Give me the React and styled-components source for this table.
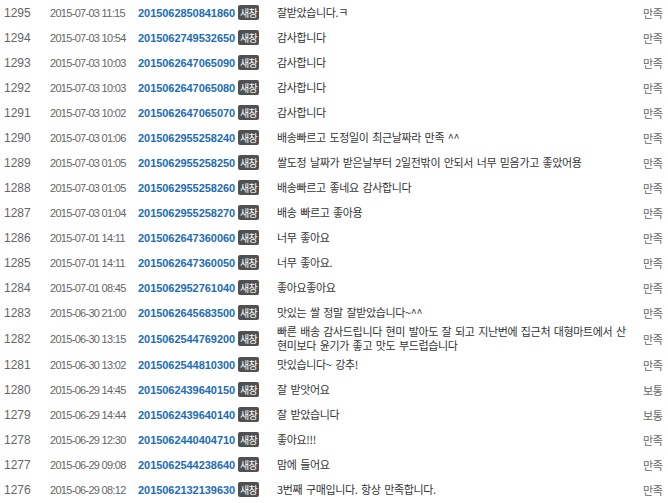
import React from "react";
import styled, { createGlobalStyle } from "styled-components";

const GlobalStyle = createGlobalStyle`
  html, body {
    margin: 0;
    padding: 0;
    background: #ffffff;
  }
  body {
    font-family: "Liberation Sans", "Noto Sans CJK KR", sans-serif;
    overflow: hidden;
  }
`;

const reviews = [
  [1295, "2015-07-03 11:15", "2015062850841860", "잘받았습니다.ㅋ", "만족"],
  [1294, "2015-07-03 10:54", "2015062749532650", "감사합니다", "만족"],
  [1293, "2015-07-03 10:03", "2015062647065090", "감사합니다", "만족"],
  [1292, "2015-07-03 10:03", "2015062647065080", "감사합니다", "만족"],
  [1291, "2015-07-03 10:02", "2015062647065070", "감사합니다", "만족"],
  [1290, "2015-07-03 01:06", "2015062955258240", "배송빠르고 도정일이 최근날짜라 만족 ^^", "만족"],
  [1289, "2015-07-03 01:05", "2015062955258250", "쌀도정 날짜가 받은날부터 2일전밖이 안되서 너무 믿음가고 좋았어용", "만족"],
  [1288, "2015-07-03 01:05", "2015062955258260", "배송빠르고 좋네요 감사합니다", "만족"],
  [1287, "2015-07-03 01:04", "2015062955258270", "배송 빠르고 좋아용", "만족"],
  [1286, "2015-07-01 14:11", "2015062647360060", "너무 좋아요", "만족"],
  [1285, "2015-07-01 14:11", "2015062647360050", "너무 좋아요.", "만족"],
  [1284, "2015-07-01 08:45", "2015062952761040", "좋아요좋아요", "만족"],
  [1283, "2015-06-30 21:00", "2015062645683500", "맛있는 쌀 정말 잘받았습니다~^^", "만족"],
  [
    1282,
    "2015-06-30 13:15",
    "2015062544769200",
    "빠른 배송 감사드립니다 현미 발아도 잘 되고 지난번에 집근처 대형마트에서 산\n현미보다 윤기가 좋고 맛도 부드럽습니다",
    "만족",
  ],
  [1281, "2015-06-30 13:02", "2015062544810300", "맛있습니다~ 강추!", "만족"],
  [1280, "2015-06-29 14:45", "2015062439640150", "잘 받앗어요", "보통"],
  [1279, "2015-06-29 14:44", "2015062439640140", "잘 받았습니다", "보통"],
  [1278, "2015-06-29 12:30", "2015062440404710", "좋아요!!!", "만족"],
  [1277, "2015-06-29 09:08", "2015062544238640", "맘에 들어요", "만족"],
  [1276, "2015-06-29 08:12", "2015062132139630", "3번째 구매입니다. 항상 만족합니다.", "만족"],
];

function App() {
  return (
    <>
      <GlobalStyle />
      <List>
        {reviews.map(([no, date, order, text, rating]) => (
          <Row key={no}>
            <No>{no}</No>
            <DateCell>{date}</DateCell>
            <OrderCell>
              <OrderLink>{order}</OrderLink>
              <NewWin>새창</NewWin>
            </OrderCell>
            <Content>{text}</Content>
            <Rating>{rating}</Rating>
          </Row>
        ))}
      </List>
    </>
  );
}

export default App;

const List = styled.div`
  width: 668px;
`;

const Row = styled.div`
  display: grid;
  grid-template-columns: 50px 88px 139px 366px 1fr;
  align-items: center;
  min-height: 25px;
`;

const No = styled.div`
  padding-left: 4px;
  font-size: 12px;
  color: #666;
`;

const DateCell = styled.div`
  font-size: 11px;
  letter-spacing: -0.7px;
  color: #666;
  white-space: nowrap;
`;

const OrderCell = styled.div`
  display: flex;
  align-items: center;
  gap: 3px;
`;

const OrderLink = styled.a`
  font-size: 11px;
  font-weight: bold;
  color: #1d6cb5;
  text-decoration: none;
  letter-spacing: -0.05px;
`;

const NewWin = styled.span`
  display: inline-block;
  padding: 0 2px;
  height: 15px;
  line-height: 15px;
  border-radius: 2px;
  background: #505050;
  color: #fff;
  font-family: "Noto Sans CJK KR", sans-serif;
  font-size: 10px;
  letter-spacing: -0.8px;
`;

const Content = styled.div`
  font-family: "Noto Sans CJK KR", sans-serif;
  font-size: 11px;
  line-height: 13.5px;
  letter-spacing: -0.35px;
  word-spacing: 1.5px;
  color: #333;
  white-space: pre-line;
`;

const Rating = styled.div`
  font-family: "Noto Sans CJK KR", sans-serif;
  font-size: 11px;
  letter-spacing: -0.4px;
  color: #666;
`;
